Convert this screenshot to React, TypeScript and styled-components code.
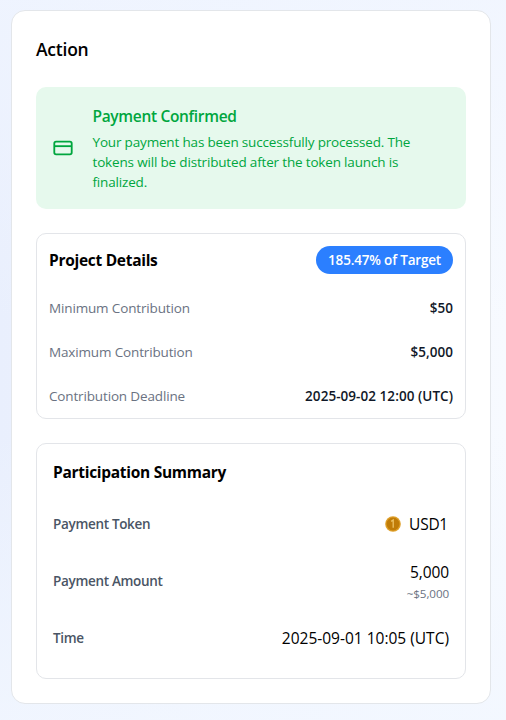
import React from 'react';
import styled, { createGlobalStyle, css } from 'styled-components';

const GlobalStyle = createGlobalStyle`
  *, *::before, *::after { box-sizing: border-box; }
  body {
    margin: 0;
    font-family: "Open Sans", "Noto Sans", sans-serif;
    color: #000;
  }
`;

const Page = styled.main`
  min-height: 720px;
  padding: 10px 15px 16px 11px;
  background:
    linear-gradient(180deg, rgba(240, 245, 255, 0.8) 0%, rgba(240, 245, 255, 0) 45%, rgba(240, 245, 255, 0) 60%, rgba(242, 247, 255, 0.8) 100%),
    linear-gradient(90deg, #e9effd 0%, #f7faff 100%);
`;

const Card = styled.section`
  height: 694px;
  padding: 24px;
  display: flex;
  flex-direction: column;
  background: #fff;
  border: 1px solid #e3e6ea;
  border-radius: 14px;
`;

const CardTitle = styled.h1`
  margin: 0 0 24px;
  font-size: 17.5px;
  line-height: 28px;
  font-weight: 600;
  letter-spacing: -0.23px;
`;

const Alert = styled.div`
  height: 122px;
  display: flex;
  align-items: center;
  gap: 20px;
  padding: 0 16px;
  border-radius: 10px;
  background: #e6f9ed;
  color: #00a63e;
`;

const AlertIcon = styled.svg`
  width: 22px;
  height: 22px;
  flex: none;
`;

const AlertBody = styled.div`
  width: 340px;
  flex: none;
  margin-left: -1.5px;
`;

const AlertTitle = styled.h2`
  margin: 0 0 4px;
  font-size: 15.5px;
  line-height: 24px;
  font-weight: 600;
  letter-spacing: -0.33px;
`;

const AlertText = styled.p`
  margin: 0;
  font-size: 13.5px;
  line-height: 20px;
  letter-spacing: -0.17px;
`;

const Panel = styled.section<{ $pad: string }>`
  margin-top: 24px;
  padding: ${(p) => p.$pad};
  border: 1px solid #e3e5e9;
  border-radius: 10px;
`;

const PanelHeader = styled.header`
  height: 28px;
  margin-bottom: 12px;
  display: flex;
  align-items: center;
  justify-content: space-between;
`;

const PanelTitle = styled.h3`
  margin: 0;
  font-size: 15.5px;
  line-height: 24px;
  font-weight: 700;
  letter-spacing: -0.29px;
`;

const Badge = styled.span`
  padding: 4px 12px;
  border-radius: 14px;
  background: #2b7fff;
  color: #fff;
  font-size: 13.5px;
  line-height: 20px;
  font-weight: 600;
  letter-spacing: -0.18px;
`;

const Row = styled.div<{ $height: number }>`
  height: ${(p) => p.$height}px;
  display: flex;
  align-items: center;
  justify-content: space-between;
`;

const SummaryRows = styled.div`
  margin-top: 12px;
`;

const Label = styled.span<{ $strong?: boolean }>`
  font-size: 13.5px;
  line-height: 20px;
  ${(p) =>
    p.$strong
      ? css`font-weight: 600; letter-spacing: -0.32px; color: #4a5565;`
      : css`letter-spacing: -0.15px; color: #6a7282;`}
`;

const DetailValue = styled.span`
  font-size: 13.5px;
  line-height: 20px;
  font-weight: 600;
  letter-spacing: 0.05px;
  color: #101828;
`;

const SummaryValue = styled.span`
  font-size: 15.5px;
  line-height: 24px;
`;

const Token = styled.span`
  display: flex;
  align-items: center;
  gap: 8px;
  padding-right: 1px;
  letter-spacing: -0.25px;
`;

const Amount = styled.div`
  display: flex;
  flex-direction: column;
  align-items: flex-end;
  padding-top: 2px;
  letter-spacing: -0.1px;
`;

const AmountNote = styled.span`
  font-size: 11.65px;
  line-height: 20px;
  color: #6a7282;
`;

const Coin = () => (
  <svg width="16" height="16" viewBox="0 0 16 16" aria-hidden="true">
    <circle cx="8" cy="8" r="7.8" fill="#dfa02a" />
    <circle cx="8" cy="8" r="6.5" fill="#c07c08" />
    <path d="M6.2 5.4 8.2 4v7.8" fill="none" stroke="#ecc263" strokeWidth="1.3" />
  </svg>
);

const details = [
  ['Minimum Contribution', '$50'],
  ['Maximum Contribution', '$5,000'],
  ['Contribution Deadline', '2025-09-02 12:00 (UTC)'],
];

export default function App() {
  return (
    <Page>
      <GlobalStyle />
      <Card>
        <CardTitle>Action</CardTitle>
        <Alert>
          <AlertIcon viewBox="0 0 24 24" fill="none" stroke="currentColor" strokeWidth="2" strokeLinejoin="round" aria-hidden="true">
            <rect x="2.5" y="5" width="19" height="14" rx="2" />
            <path d="M2.5 10h19" />
          </AlertIcon>
          <AlertBody>
            <AlertTitle>Payment Confirmed</AlertTitle>
            <AlertText>
              Your payment has been successfully processed. The tokens will be distributed after the token launch is finalized.
            </AlertText>
          </AlertBody>
        </Alert>

        <Panel $pad="12px 12px 0">
          <PanelHeader>
            <PanelTitle>Project Details</PanelTitle>
            <Badge>185.47% of Target</Badge>
          </PanelHeader>
          {details.map(([label, value]) => (
            <Row key={label} $height={44}>
              <Label>{label}</Label>
              <DetailValue>{value}</DetailValue>
            </Row>
          ))}
        </Panel>

        <Panel $pad="16px 16px 12px">
          <PanelTitle>Participation Summary</PanelTitle>
          <SummaryRows>
            <Row $height={56}>
              <Label $strong>Payment Token</Label>
              <Token>
                <Coin />
                <SummaryValue>USD1</SummaryValue>
              </Token>
            </Row>
            <Row $height={58}>
              <Label $strong>Payment Amount</Label>
              <Amount>
                <SummaryValue>5,000</SummaryValue>
                <AmountNote>~$5,000</AmountNote>
              </Amount>
            </Row>
            <Row $height={56}>
              <Label $strong>Time</Label>
              <SummaryValue>2025-09-01 10:05 (UTC)</SummaryValue>
            </Row>
          </SummaryRows>
        </Panel>
      </Card>
    </Page>
  );
}
